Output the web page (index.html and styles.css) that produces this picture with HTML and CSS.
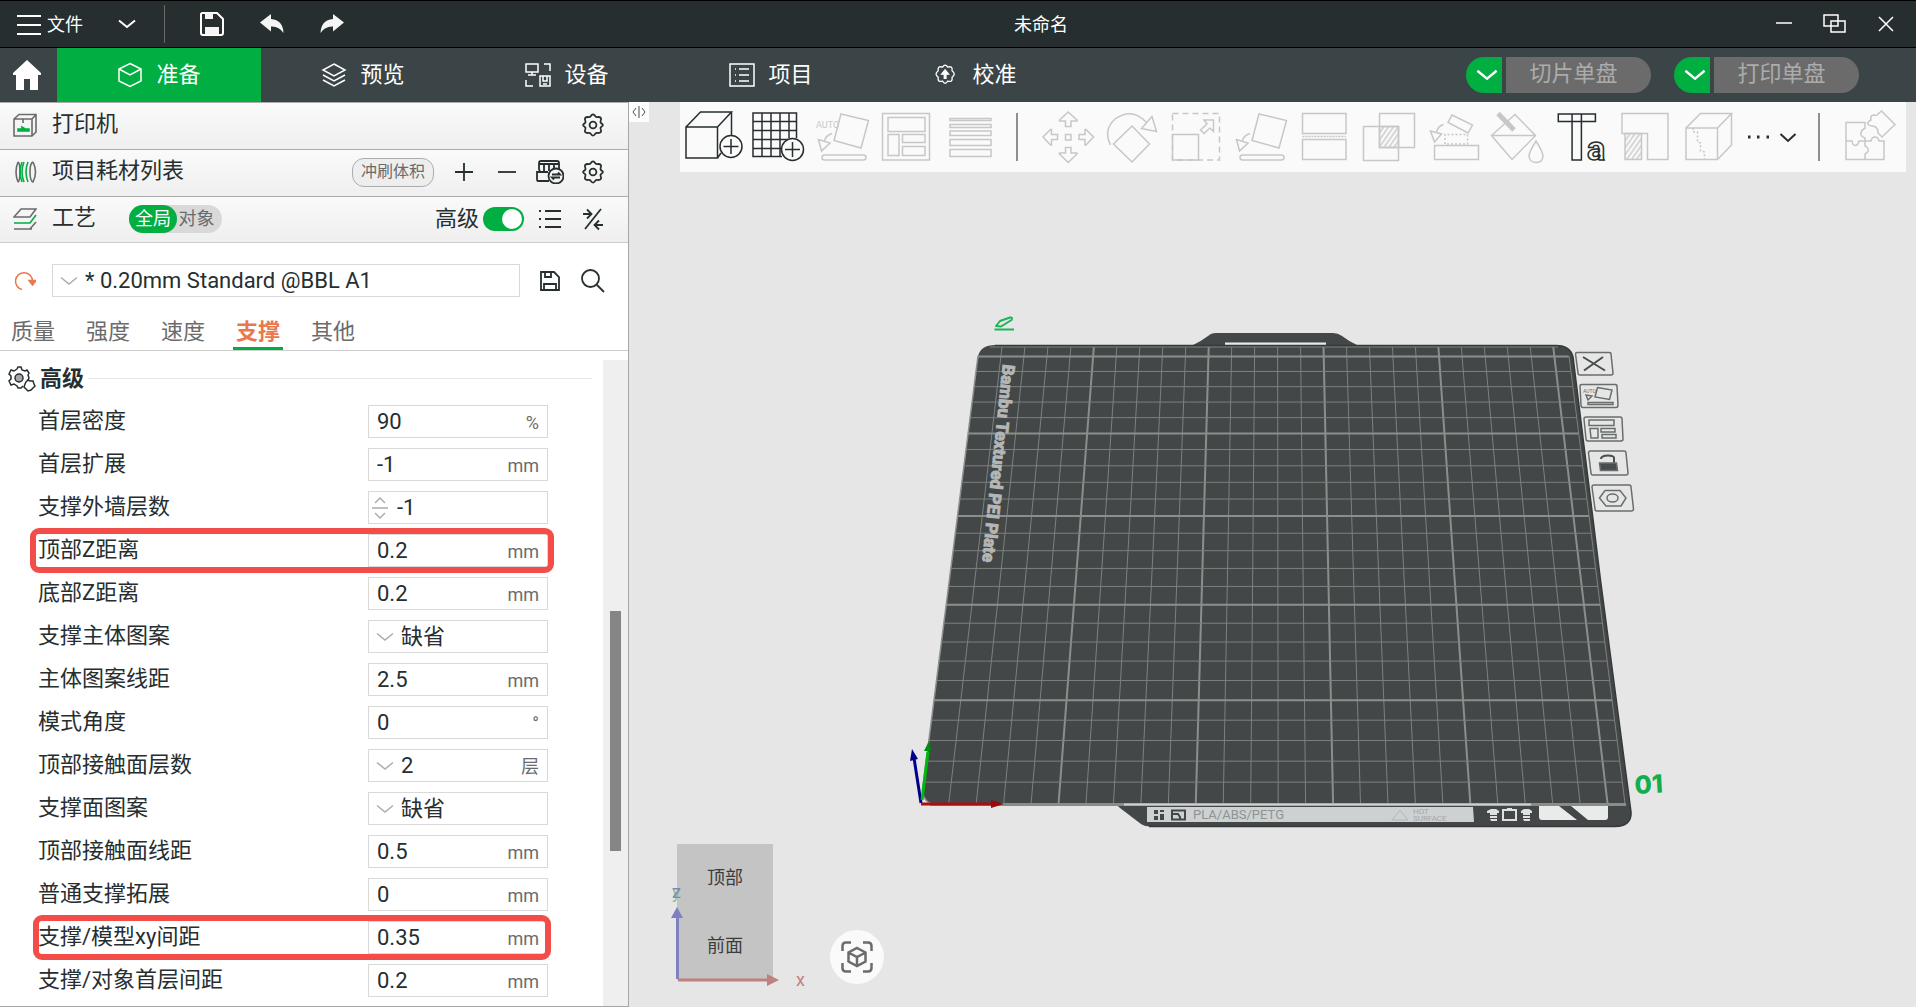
FILE: index.html
```html
<!DOCTYPE html>
<html lang="zh-CN">
<head>
    <meta charset="UTF-8">
    <meta name="viewport" content="width=device-width, initial-scale=1.0">
    <title>未命名</title>
    <link rel="stylesheet" href="styles.css">
</head>
<body>
    <!-- Shared icons -->
    <svg class="defs" width="0" height="0">
        <symbol id="chevron" viewBox="0 0 18 10"><path d="M1 1.5L9 8L17 1.5"/></symbol>
        <symbol id="gear" viewBox="0 0 24 24"><path d="M9.6 3.4Q12 -.6 14.4 3.4Q15.4 4.6 17 4Q21.4 4 19.6 8Q19 9.4 20.4 10.4Q23.4 12 20.4 13.8Q19 14.8 19.6 16Q21.4 20 17 20Q15.4 19.4 14.4 20.6Q12 24.6 9.6 20.6Q8.6 19.4 7 20Q2.6 20 4.4 16Q5 14.8 3.6 13.8Q.6 12 3.6 10.4Q5 9.4 4.4 8Q2.6 4 7 4Q8.6 4.6 9.6 3.4Z"/><circle cx="12" cy="12" r="3.4"/></symbol>
        <symbol id="orient" viewBox="0 0 64 70"><path d="M31 12L58.500 18.500L51 46L24 38.500ZM8.500 37.500L20 41L11.500 49ZM22 31.500Q15 34 14.500 39"/><rect x="12" y="53" width="44" height="5" rx="2.500"/></symbol>
        <pattern id="hatch" width="4" height="4" patternUnits="userSpaceOnUse" patternTransform="rotate(35)"><path d="M1 0V4" stroke="#c6c8c8" stroke-width="1.400"/></pattern>
    </svg>

    <header class="titlebar">
        <div class="title-left">
            <button class="file-menu">
                <svg width="24" height="20" viewBox="0 0 24 20"><path d="M0 1H24M0 10H24M0 19H24"/></svg>
                文件
            </button>
            <button class="title-btn" aria-label="更多"><svg width="18" height="10"><use href="#chevron"/></svg></button>
            <span class="title-sep"></span>
            <button class="title-btn save" aria-label="保存"><svg width="24" height="24" viewBox="0 0 24 24"><path d="M2 1H17L23 7V21Q23 23 21 23H3Q1 23 1 21V2Z"/><path class="solid" d="M5 1H13V7H5ZM5 15H19V23H5Z"/></svg></button>
            <button class="title-btn" aria-label="撤销"><svg width="24" height="20" viewBox="0 0 24 20"><path class="solid" d="M0 8.500L11 0V5Q23 6 23.500 19Q19 12 11 12.500V17.500Z"/></svg></button>
            <button class="title-btn" aria-label="重做"><svg width="24" height="20" viewBox="0 0 24 20"><path class="solid" d="M24 8.500L13 0V5Q1 6 .5 19Q5 12 13 12.500V17.500Z"/></svg></button>
        </div>
        <h1 class="doc-title">未命名</h1>
        <div class="window-btns">
            <button aria-label="最小化"><svg width="16" height="16" viewBox="0 0 16 16"><path d="M0 7H16"/></svg></button>
            <button aria-label="还原"><svg width="24" height="20" viewBox="0 0 24 20"><path d="M1 1H15V12H1ZM8 7H22V18H8Z"/></svg></button>
            <button aria-label="关闭"><svg width="16" height="16" viewBox="0 0 16 16"><path d="M1 1L15 15M15 1L1 15"/></svg></button>
        </div>
    </header>

    <nav class="tabbar">
        <button class="home" aria-label="主页"><svg width="30" height="32" viewBox="0 0 30 32"><path d="M15 1L29 14V16H26V31H18V20H12V31H4V16H1V14Z"/></svg></button>
        <button class="tab active"><svg width="26" height="26" viewBox="0 0 26 26"><path d="M13 1.500L24 7V19L13 24.500L2 19V7ZM2 7L13 13L24 7"/></svg>准备</button>
        <button class="tab"><svg width="26" height="26" viewBox="0 0 26 26"><path d="M13 2L24 8L13 14L2 8ZM2 13L13 19L24 13M2 18L13 24L24 18"/></svg>预览</button>
        <button class="tab"><svg width="26" height="26" viewBox="0 0 26 26"><path d="M1 2H13V10H1ZM7 10V13M3 13H11M19 2H25V9M1 18V24H8M15 14H25V24H15ZM18 14V19H22V14M18 22H22"/></svg>设备</button>
        <button class="tab"><svg width="26" height="26" viewBox="0 0 26 26"><path d="M1 2H25V24H1ZM6 7H7M10 7H20M6 13H7M10 13H20M6 19H7M10 19H20"/></svg>项目</button>
        <button class="tab"><svg width="26" height="26" viewBox="-2 -2 30 30"><path d="M9 4Q12 -1 15 4Q21 2 20 8Q25 12 20 15.500Q21 22 15 20Q12 25 9 20Q3 22 4 15.500Q-1 12 4 8Q3 2 9 4Z"/><path d="M12 7L16 12H13V17H11V12H8Z" fill="#fff"/></svg>校准</button>
        <div class="actions">
            <div class="split">
                <button class="split-arrow" aria-label="切片选项"><svg width="22" height="12"><use href="#chevron"/></svg></button>
                <button class="split-main" disabled>切片单盘</button>
            </div>
            <div class="split">
                <button class="split-arrow" aria-label="打印选项"><svg width="22" height="12"><use href="#chevron"/></svg></button>
                <button class="split-main" disabled>打印单盘</button>
            </div>
        </div>
    </nav>

    <main class="workspace">
        <aside class="sidebar">
            <div class="bar">
                <svg class="bar-icon" width="24" height="24" viewBox="0 0 24 24"><path d="M1 6L6 1.500H23V19L19 23H1ZM1 6H19V23M19 6L23 1.500M10 6V10" stroke="#6b6b6b"/><path d="M5 18H16V16H12L9 14V16H5Z" fill="#00ae42" stroke="#00ae42"/></svg>
                <h2>打印机</h2>
                <button class="icon-btn push" aria-label="打印机设置"><svg width="24" height="24"><use href="#gear"/></svg></button>
            </div>
            <div class="bar">
                <svg class="bar-icon" width="24" height="24" viewBox="0 0 24 24"><path d="M5 2Q1 12 5 22M5 2Q7 3 7 12Q7 21 5 22M20 2Q17 3 17 12Q17 21 20 22Q25 12 20 2" stroke="#6b6b6b"/><path d="M11 2Q7 12 11 22M15 2Q11 12 15 22M9 2Q5 12 9 22" stroke="#00ae42"/></svg>
                <h2>项目耗材列表</h2>
                <button class="flush push">冲刷体积</button>
                <button class="icon-btn" aria-label="添加"><svg width="20" height="20" viewBox="0 0 20 20"><path d="M1 10H19M10 1V19"/></svg></button>
                <button class="icon-btn" aria-label="删除"><svg width="20" height="20" viewBox="0 0 20 20"><path d="M1 10H19"/></svg></button>
                <button class="icon-btn" aria-label="同步耗材"><svg width="28" height="24" viewBox="0 0 28 24"><path d="M13 21H2Q1 21 1 19V12H4L3 9V3Q3 1 5 1H21Q23 1 23 3V9M3 4H23M8 4V11M13 4V11M18 4V9M4 12H12"/><circle cx="20" cy="16" r="7.500"/><path d="M16 14.500H24L22 12.500M24 17.500H16L18 19.500"/></svg></button>
                <button class="icon-btn" aria-label="耗材设置"><svg width="24" height="24"><use href="#gear"/></svg></button>
            </div>
            <div class="bar">
                <svg class="bar-icon" width="24" height="24" viewBox="0 0 24 24"><path d="M8 2H23L17 10H1ZM19 22H1M1 22H17L23 15" stroke="#6b6b6b"/><path d="M1 16H17L23 8" stroke="#00ae42"/></svg>
                <h2>工艺</h2>
                <div class="scope">
                    <button class="on">全局</button>
                    <button>对象</button>
                </div>
                <label class="advanced push">高级
                    <input type="checkbox" class="switch" checked>
                </label>
                <button class="icon-btn" aria-label="列表"><svg width="22" height="20" viewBox="0 0 22 20"><path d="M0 2H2M6 2H22M0 10H2M6 10H22M0 18H2M6 18H22" stroke-width="2"/></svg></button>
                <button class="icon-btn" aria-label="对比"><svg width="24" height="24" viewBox="0 0 24 24"><path d="M20 2L4 22M2 7H10M6 2.500L10.500 7L6 11.500M22 18H13M18 13.500L13.500 18L18 22.500"/></svg></button>
            </div>

            <div class="preset">
                <button class="reset" aria-label="重置"><svg width="22" height="20" viewBox="0 0 22 20"><path d="M8 18.500A8.500 8.500 0 1 1 18.500 10"/><path d="M15 9.500H22L18.500 14Z" fill="#e9784d"/></svg></button>
                <div class="field preset-field">
                    <svg class="arrow" width="18" height="10"><use href="#chevron"/></svg>
                    <select aria-label="工艺预设"><option>* 0.20mm Standard @BBL A1</option></select>
                </div>
                <button class="icon-btn" aria-label="保存预设"><svg width="20" height="20" viewBox="0 0 20 20"><path d="M1 1H14L19 6V19H1ZM5 1V6H11V1M4 19V13H16V19"/></svg></button>
                <button class="icon-btn" aria-label="搜索"><svg width="24" height="24" viewBox="0 0 24 24"><circle cx="9.500" cy="9.500" r="8.500"/><path d="M16 16L23 23"/></svg></button>
            </div>

            <div class="pages">
                <button>质量</button>
                <button>强度</button>
                <button>速度</button>
                <button class="current">支撑</button>
                <button>其他</button>
            </div>

            <div class="panel">
                <div class="params">
                    <h3 class="group">
                        <svg width="28" height="26" viewBox="0 0 28 26"><path d="M9 3L10 1H13L14 4L17 5L19 4L21 7L20 9L21 12L20 14M9 3L6 5L3 4L1 8L3 10V13L1 15L3 19L6 18L9 20L10 22H13L15 20" /><circle cx="11" cy="12" r="4" fill="#a5a9aa"/><path d="M18 16L20 14L22 15L25 15L26 18L27 20L25 22L23 24L20 25L18 23L16 21L17 18Z"/></svg>
                        高级
                    </h3>
                    <div class="param">
                        <label for="density">首层密度</label>
                        <div class="field"><input id="density" value="90"><span class="unit">%</span></div>
                    </div>
                    <div class="param">
                        <label for="expand">首层扩展</label>
                        <div class="field"><input id="expand" value="-1"><span class="unit">mm</span></div>
                    </div>
                    <div class="param">
                        <label for="walls">支撑外墙层数</label>
                        <div class="field">
                            <svg class="spin" width="18" height="26" viewBox="0 0 16 26"><path d="M3 8L8 3L13 8M0 13H16M3 18L8 23L13 18"/></svg>
                            <input id="walls" value="-1">
                        </div>
                    </div>
                    <div class="param marked wide">
                        <label for="topz">顶部Z距离</label>
                        <div class="field"><input id="topz" value="0.2"><span class="unit">mm</span></div>
                    </div>
                    <div class="param">
                        <label for="bottomz">底部Z距离</label>
                        <div class="field"><input id="bottomz" value="0.2"><span class="unit">mm</span></div>
                    </div>
                    <div class="param">
                        <label for="base-pattern">支撑主体图案</label>
                        <div class="field">
                            <svg class="arrow" width="18" height="10"><use href="#chevron"/></svg>
                            <select id="base-pattern"><option>缺省</option></select>
                        </div>
                    </div>
                    <div class="param">
                        <label for="base-spacing">主体图案线距</label>
                        <div class="field"><input id="base-spacing" value="2.5"><span class="unit">mm</span></div>
                    </div>
                    <div class="param">
                        <label for="angle">模式角度</label>
                        <div class="field"><input id="angle" value="0"><span class="unit">°</span></div>
                    </div>
                    <div class="param">
                        <label for="top-layers">顶部接触面层数</label>
                        <div class="field">
                            <svg class="arrow" width="18" height="10"><use href="#chevron"/></svg>
                            <select id="top-layers"><option>2</option></select>
                            <span class="unit">层</span>
                        </div>
                    </div>
                    <div class="param">
                        <label for="face-pattern">支撑面图案</label>
                        <div class="field">
                            <svg class="arrow" width="18" height="10"><use href="#chevron"/></svg>
                            <select id="face-pattern"><option>缺省</option></select>
                        </div>
                    </div>
                    <div class="param">
                        <label for="top-spacing">顶部接触面线距</label>
                        <div class="field"><input id="top-spacing" value="0.5"><span class="unit">mm</span></div>
                    </div>
                    <div class="param">
                        <label for="normal-expand">普通支撑拓展</label>
                        <div class="field"><input id="normal-expand" value="0"><span class="unit">mm</span></div>
                    </div>
                    <div class="param marked">
                        <label for="xy">支撑/模型xy间距</label>
                        <div class="field"><input id="xy" value="0.35"><span class="unit">mm</span></div>
                    </div>
                    <div class="param">
                        <label for="first-xy">支撑/对象首层间距</label>
                        <div class="field"><input id="first-xy" value="0.2"><span class="unit">mm</span></div>
                    </div>
                </div>
                <div class="track"><div class="thumb"></div></div>
            </div>
        </aside>

        <section class="view">
            <!-- Build plate -->
            <svg class="scene" viewBox="629 102 1287 905">
                <path d="M978 356Q981 345 995 345H1193Q1200 342 1208 336Q1211 333 1216 333H1333Q1338 333 1342 336Q1350 342 1357 345H1555Q1570 345 1573 357L1600.500 580L1631 812Q1632 826 1615 826.500H1149Q1144 826 1141 824L1120 808Q1118 805 1112 805H936Q923 803 922.500 790L950 575Z" fill="#434748"/>
                <path d="M1225 342.500H1326V345H1225Z" fill="#e9eaea"/>
                <path d="M978 356L950 575L922.500 790Q923 803 936 805" fill="none" stroke="#8d918e" stroke-width="1.500"/>
                <path d="M995 345.500H1555Q1570 345 1573 357L1600.500 580L1631 812Q1632 826 1615 826.500H1149" fill="none" stroke="#36393a" stroke-width="1.500"/>
                <g id="grid"></g>
                <path d="M930 804.500H1626" stroke="#898d8a" stroke-width="3"/>
                <path d="M1124 804.500H1531" stroke="#cdd1d2" stroke-width="2"/>
                <text class="plate-name" transform="translate(1003 364) rotate(96)">Bambu Textured PEI Plate</text>

                <path d="M1147 807H1473L1474 822H1147Z" fill="#cdd1d2"/>
                <path d="M1154 810H1158V814H1154ZM1160 810H1164V812H1160ZM1160 814H1164V820H1160ZM1154 816H1158V820H1154Z" fill="#434748"/>
                <path d="M1172 810.500H1185V819.500H1172ZM1173 814H1178L1180 817V819" fill="none" stroke="#434748" stroke-width="2"/>
                <text class="plate-mat" x="1193" y="819">PLA/ABS/PETG</text>
                <path d="M1392 820L1400 810L1408 820Z" fill="none" stroke="#b3b7b8"/>
                <text class="plate-hot" x="1413" y="814">HOT</text>
                <text class="plate-hot" x="1413" y="821">SURFACE</text>
                <path d="M1487 811L1491 809H1496L1499 811V813H1497V815H1490V813H1487ZM1490 816H1497V818H1490ZM1490 819H1497V821H1491ZM1521 811L1524 809H1529L1532 811V813H1530V815H1523V813H1521ZM1523 816H1530V818H1523ZM1523 819H1530V821H1524Z" fill="#dfe1e1"/>
                <path d="M1503 810H1516V820H1503ZM1507 809H1512" fill="none" stroke="#dfe1e1" stroke-width="2"/>
                <path d="M1539 806H1559L1577 820H1542Q1539 820 1539 817ZM1571 806H1608V817Q1608 820 1605 820H1588Z" fill="#e9eaea"/>
                <text class="plate-no" transform="translate(1635 794) rotate(-3)">01</text>

                <!-- Origin axes -->
                <g fill="none" stroke-width="3">
                    <path d="M921 803L914 758" stroke="#00008f"/>
                    <path d="M910 761L912 749L918 759Z" fill="#00008f" stroke="none"/>
                    <path d="M922 800L928 752" stroke="#00b70b"/>
                    <path d="M924 751L929 741L931 751Z" fill="#008f0b" stroke="none"/>
                    <path d="M921 804H993" stroke="#b00d0d"/>
                    <path d="M991 800L1004 804L991 808Z" fill="#960b0b" stroke="none"/>
                </g>

                <!-- Rename pen -->
                <path d="M994.500 329.500H1014M996 326L1000 321L1010 317.500Q1013 317 1011.500 320L1001 326.500Z" fill="none" stroke="#1db45a" stroke-width="2" stroke-linejoin="round"/>

                <!-- Plate controls -->
                <g class="plate-tools">
                    <path d="M1577 352.500H1609Q1611 352.500 1611 354L1613 373Q1613 375 1611 375H1580Q1578 375 1578 373L1575.500 354Q1575.500 352.500 1577 352.500Z"/>
                    <path d="M1583 357L1605 370.500M1603 357L1584 370.500" stroke="#4a4d4e" stroke-width="2"/>
                    <path d="M1582 384.500H1615Q1617 384.500 1617 386L1618 405Q1618 407.500 1616 407.500H1583Q1581 407.500 1581 405L1580 386Q1580 384.500 1582 384.500ZM1597.500 387.500L1612 390L1609.500 399.500L1595 397ZM1588 402.500H1613V404.500H1588ZM1586 395L1592 396L1588 400Z"/>
                    <text x="1583" y="393">AUTO</text>
                    <path d="M1586 417H1620Q1622 417 1622 419L1623 439Q1623 441 1621 441H1588Q1586 441 1586 439L1584 419Q1584 417 1586 417ZM1589 420H1614V425.500H1589ZM1590 428.500H1598V438H1591ZM1601 428.500H1615V432H1601ZM1602 434.500H1616V438H1602Z"/>
                    <path d="M1590 451H1624Q1626 451 1626 453L1628 473Q1628 475 1626 475H1593Q1591 475 1591 473L1588.500 453Q1588.500 451 1590 451Z"/>
                    <path d="M1601 459Q1601 455.500 1608 455.500Q1614 455.500 1614 458V463" stroke="#4a4d4e" stroke-width="2"/>
                    <path d="M1599.500 463H1616.500L1617.500 470.500H1600.500Z" fill="#4a4d4e"/>
                    <path d="M1594 485H1629Q1631 485 1631 487L1633.500 509Q1633.500 511 1631 511H1597Q1595 511 1595 509L1592 487Q1592 485 1594 485ZM1599.500 498L1605 490.500H1620L1626 498L1621 506H1606ZM1607 498A5.500 4 0 1 0 1618 498A5.500 4 0 1 0 1607 498"/>
                </g>
            </svg>

            <button class="collapse" aria-label="折叠侧栏"><svg width="14" height="12" viewBox="0 0 14 12"><path d="M4 2L1 6L4 10M7 0V12M10 2L13 6L10 10"/></svg></button>

            <div class="toolbar">
                <button class="enabled" aria-label="添加模型"><svg viewBox="0 0 64 70"><path d="M4 25H35.500V56H4ZM4 25L18.500 10H49.500L35.500 25M49.500 10V33M35.500 56L39 51"/><circle cx="49" cy="44.500" r="11"/><path d="M41.500 44.500H56.500M49 37V52"/></svg></button>
                <button class="enabled" aria-label="添加盘"><svg viewBox="0 0 64 70"><path d="M36 54.500H7V11H50.500V36M16 11V54.500M25 11V54.500M34 11V54.500M43 11V36M7 19.500H50.500M7 28.500H50.500M7 37.500H42M7 46.500H35"/><circle cx="46.500" cy="47.500" r="11"/><path d="M39 47.500H54M46.500 40V55"/></svg></button>
                <button aria-label="自动朝向"><svg viewBox="0 0 64 70"><use href="#orient"/><text class="auto" x="6" y="26">AUTO</text></svg></button>
                <button aria-label="自动摆放"><svg viewBox="0 0 64 70"><path d="M8.500 11.500H55.500V58H8.500ZM14 15.500H51V29.500H14ZM14 32.500H25V53.500H14ZM28.500 32.500H51V40.500H28.500ZM28.500 44.500H51V53.500H28.500Z"/></svg></button>
                <button aria-label="可变层高"><svg viewBox="0 0 64 70"><path d="M12 16.500H53V18.500H12ZM12 22.500H53V25.500H12ZM12 29H53V33.500H12ZM12 37.500H53V43.500H12ZM12 47.500H53V54.500H12Z"/></svg></button>
                <span class="tool-sep"></span>
                <button aria-label="移动"><svg viewBox="0 0 64 70"><path d="M29.500 32.500H35V38H29.500ZM32.200 10L41 18V19H35V24.500H29.500V19H23.500V18ZM32.200 60.500L41 52V51H35V45.500H29.500V51H23.500V52ZM7 35L14.500 27.500H15.500V32.500H21.500V37.500H15.500V43H14.500ZM57.500 35L50 27.500H49V32.500H43V37.500H49V43H50Z"/></svg></button>
                <button aria-label="旋转"><svg viewBox="0 0 64 70"><path d="M32 24L49.500 42L32 60L13.500 42ZM10.500 43Q3 28 15 17Q32 5 46 20M52 14.500L56.500 29.500L41.500 26.500Z"/></svg></button>
                <button aria-label="缩放"><svg viewBox="0 0 64 70"><path d="M8.500 11.500H55.500V58H8.500Z" stroke-dasharray="6 4"/><path d="M8.500 32.500H34.500V58H8.500ZM40 18H49.500V29.500L46 26L40 31.500L36.500 28L43 22Z"/></svg></button>
                <button aria-label="选择底面"><svg viewBox="0 0 64 70"><use href="#orient"/></svg></button>
                <button aria-label="剪切"><svg viewBox="0 0 64 70"><path d="M10.500 11.500H54V31.500H10.500ZM10.500 37.500H54V57.500H10.500Z"/><path d="M10.500 34.500H54" stroke-dasharray="2 1"/></svg></button>
                <button aria-label="布尔"><svg viewBox="0 0 64 70"><path d="M23.500 24.500H42.500V45.500H23.500Z" fill="url(#hatch)"/><path d="M23.500 11.500H58.500V45.500H23.500ZM7.500 24.500H42.500V58.500H7.500Z"/></svg></button>
                <button aria-label="支撑绘制"><svg viewBox="0 0 64 70"><path d="M14.500 43.500H58.500V57.500H14.500ZM32 13L52.500 23L48 31L28 20.500ZM10.500 29L21.500 32L14.500 40ZM23.500 22.500Q18 24 16.500 30"/><path d="M25 42V32.500H47.500V42Z" stroke-dasharray="2 2"/></svg></button>
                <button aria-label="上色"><svg viewBox="0 0 64 70"><path d="M31 12.500L51.500 33.500L28 57.500L7.500 33.500ZM7.500 33.500H51.500M52 39Q45 50 45 54.500Q46 60.500 52 60.500Q58.500 60.500 59 54.500Q59 50 52 39Z"/><path d="M14 11.500L30 28" stroke-width="5"/></svg></button>
                <button class="enabled" aria-label="文字"><svg viewBox="0 0 64 70"><text class="big-t" x="9" y="58">T<tspan class="small-a" x="39">a</tspan></text></svg></button>
                <button aria-label="接缝绘制"><svg viewBox="0 0 64 70"><path d="M10 11.500H56V57.500H35.500V31.500H10Z"/><path d="M13 31.500H29.500V57.500H13Z" fill="url(#hatch)"/></svg></button>
                <button aria-label="模糊表面"><svg viewBox="0 0 64 70"><path d="M10 26H41.500V57.500H10ZM10 26L24.500 11.500H55.500L41.500 26M55.500 11.500V43L41.500 57.500"/><path d="M17 26V30H21.500V40L24.500 41V49L28.500 50V57.500" stroke-dasharray="2 2"/></svg></button>
                <button class="enabled" aria-label="更多工具"><svg viewBox="0 0 64 70"><path d="M8 35H10.500M17 35H19.500M26.500 35H29" stroke-width="3"/><path d="M40.500 32L48 39L55.500 32" stroke-width="2"/></svg></button>
                <span class="tool-sep"></span>
                <button aria-label="装配"><svg viewBox="0 0 64 70"><path d="M8 20.500H27V26Q22 29 23 33Q24 35 27 36V39H21Q20 43.500 17.500 43.500Q14.500 43.500 14 39H8ZM8 39V57.500H27V52Q31 50 30 47Q29 44.500 27 44V39M27 57.500H46V39H41Q40 35 37 35Q34 35 33 39H27M43.500 9L57 22.500L44 35L40 31Q40 24 34 24Q31 24 30 22Q29 20 33 18Q32 13 36 13Q39 14 40 12Z"/></svg></button>
            </div>

            <svg class="viewcube" width="200" height="172" viewBox="30 115 200 172">
                <rect x="37" y="124" width="96" height="136" fill="#c4c4c4"/>
                <text class="face" x="85" y="164">顶部</text>
                <text class="face" x="85" y="232">前面</text>
                <path d="M37.500 259V198" stroke="#8080bf" stroke-width="3"/>
                <path d="M31 198L37 187L43 198Z" fill="#8080bf"/>
                <path d="M38 260H128" stroke="#bf8080" stroke-width="3"/>
                <path d="M127 254V266L139 260Z" fill="#bf8080"/>
                <text class="axis" x="32" y="178" fill="#80c592">y</text>
                <text class="axis" x="32" y="178" fill="#7f86bd">z</text>
                <text class="axis" x="156" y="266" fill="#c57f7f">x</text>
            </svg>

            <button class="fit" aria-label="适应视图"><svg width="32" height="32" viewBox="0 0 32 32"><path d="M1.500 10V5Q1.500 1.500 5 1.500H10M22 1.500H27Q30.500 1.500 30.500 5V10M30.500 22V27Q30.500 30.500 27 30.500H22M10 30.500H5Q1.500 30.500 1.500 27V22M16 7L24.500 11.500V20.500L16 25L7.500 20.500V11.500ZM7.500 11.500L16 16L24.500 11.500M16 16V25"/></svg></button>
        </section>
    </main>

    <script>
        const grid = document.getElementById('grid');

        function addLine(x1, y1, x2, y2, bold) {
            const line = document.createElementNS('http://www.w3.org/2000/svg', 'line');
            line.setAttribute('x1', x1);
            line.setAttribute('y1', y1);
            line.setAttribute('x2', x2);
            line.setAttribute('y2', y2);
            line.setAttribute('class', bold ? 'grid-line bold' : 'grid-line');
            grid.appendChild(line);
        }

        // Plate edges in perspective, y is the screen row
        function edge(y, top, bottom) {
            return top + (bottom - top) * (y - 347) / (803.5 - 347);
        }

        // Lines along the depth of the plate, every fifth one is thicker
        for (let i = 1; i <= 25; i++) {
            addLine(979 + 22.97 * i, 347, 921.3 + 27.45 * i, 803.5, i % 5 === 0);
        }
        addLine(1569, 356, 1625, 803.5, false);
        addLine(990, 347, 1558, 347, false);

        // Lines across the plate
        for (let k = 0; k <= 24; k++) {
            const y = (356.5 + 12.494 * k) / (1 - 0.0067 * k);
            addLine(edge(y, 979, 921.3), y, edge(y, 1567.5, 1625), y, k % 5 === 0);
        }
    </script>
</body>
</html>
```
FILE: styles.css
```css
* {
    box-sizing: border-box;
}

body {
    margin: 0;
    height: 100vh;
    display: flex;
    flex-direction: column;
    overflow: hidden;
    font-family: Roboto, 'Noto Sans CJK SC', sans-serif;
    font-size: 22px;
    line-height: 32px;
    color: #262e30;
    background-color: #e6e6e6;
}

button,
input,
select {
    font: inherit;
    color: inherit;
    background: none;
    border: none;
    border-radius: 0;
    padding: 0;
    margin: 0;
}

button {
    display: flex;
    align-items: center;
    justify-content: center;
    flex-shrink: 0;
}

h1, h2, h3 {
    margin: 0;
    font-size: inherit;
    font-weight: normal;
}

svg {
    display: block;
    flex-shrink: 0;
    fill: none;
}

.defs {
    position: absolute;
}

/* Title bar */
.titlebar {
    display: flex;
    height: 48px;
    border-top: 1px solid #000;
    border-bottom: 1px solid #000;
    background-color: #262e30;
    color: #fff;
    font-size: 18px;
    stroke: #fff;
    stroke-width: 2;
}

.title-left {
    display: flex;
    align-items: center;
    width: 365px;
    padding-left: 17px;
}

.file-menu {
    gap: 6px;
    padding-top: 1px;
}

.title-btn {
    width: 60px;
    height: 46px;
}

.file-menu + .title-btn {
    margin-left: 14px;
}

.title-btn .solid {
    fill: #f5f5f5;
    stroke: none;
}

.title-sep {
    width: 1px;
    height: 38px;
    margin: 0 17px 0 7px;
    background-color: #6b6b6b;
}

.doc-title {
    flex: 1;
    text-align: center;
    line-height: 48px;
}

.window-btns {
    display: flex;
    padding: 0 5px 0 41px;
    stroke-width: 1.5;
}

.window-btns button {
    width: 51px;
}

/* Main tabs */
.tabbar {
    display: flex;
    height: 54px;
    background-color: #3b4446;
    color: #fff;
}

.home {
    width: 57px;
    padding-right: 4px;
}

.home path {
    fill: #fff;
}

.tab {
    width: 204px;
    gap: 13px;
    padding-bottom: 1px;
    stroke: #fff;
    stroke-width: 1.5;
}

.tab.active {
    background-color: #00ae42;
}

.actions {
    display: flex;
    align-items: center;
    gap: 23px;
    margin-left: auto;
    padding-right: 57px;
}

.split {
    display: flex;
    gap: 4px;
    height: 36px;
}

.split-arrow {
    width: 36px;
    padding-left: 6px;
    border-radius: 18px 0 0 18px;
    background-color: #00ae42;
    stroke: #fff;
    stroke-width: 2;
}

.split-main {
    width: 145px;
    padding-bottom: 2px;
    padding-right: 10px;
    border-radius: 0 18px 18px 0;
    background-color: #6b6b6b;
    color: #acacac;
}

.workspace {
    flex: 1;
    display: flex;
    min-height: 0;
}

/* Sidebar */
.sidebar {
    width: 629px;
    flex-shrink: 0;
    display: flex;
    flex-direction: column;
    border-right: 1px solid #a6a6a6;
    border-bottom: 1px solid #a6a6a6;
    background-color: #fff;
}

.bar {
    display: flex;
    align-items: center;
    height: 47px;
    padding: 0 14px 2px 13px;
    border-top: 1px solid #acacac;
    background: linear-gradient(#fafafa, #efefef);
}

.bar:nth-child(3) {
    border-bottom: 1px solid #cecece;
}

.bar h2 {
    margin-left: 15px;
    padding-bottom: 2px;
}

.bar-icon {
    stroke-width: 1.6;
}

.push {
    margin-left: auto;
}

.icon-btn {
    width: 43px;
    height: 32px;
    stroke: #262e30;
    stroke-width: 1.8;
}

.flush {
    width: 82px;
    height: 29px;
    margin-right: 8px;
    border: 1px solid #acacac;
    border-radius: 12px;
    background-color: #eee;
    color: #6b6b6b;
    font-size: 16px;
}

.scope {
    display: flex;
    height: 28px;
    margin-left: 33px;
    border-radius: 14px;
    background-color: #d9d9d9;
    color: #6b6b6b;
    font-size: 18px;
}

.scope button {
    width: 45px;
    padding-right: 6px;
}

.scope .on {
    width: 48px;
    padding: 0;
    border-radius: 14px;
    background-color: #00ae42;
    color: #fff;
}

.advanced {
    display: flex;
    align-items: center;
    gap: 4px;
    margin-right: 4px;
}

.switch {
    appearance: none;
    display: flex;
    align-items: center;
    justify-content: flex-end;
    width: 41px;
    height: 24px;
    padding: 2px;
    border-radius: 12px;
    background-color: #00ae42;
}

.switch::before {
    content: '';
    width: 20px;
    height: 20px;
    border-radius: 50%;
    background-color: #fff;
}

.preset {
    display: flex;
    align-items: center;
    padding: 21px 14px 0 0;
}

.reset {
    width: 52px;
    padding-right: 2px;
    stroke: #e9784d;
    stroke-width: 1.5;
}

.field {
    display: flex;
    align-items: baseline;
    width: 180px;
    height: 33px;
    border: 1px solid #d9d9d9;
    background-color: #fff;
}

.field input,
.field select {
    flex: 1;
    width: 0;
    height: 31px;
    padding-left: 8px;
    line-height: 31px;
    outline: none;
    appearance: none;
}

.field select {
    padding-left: 7px;
}

.arrow,
.spin {
    align-self: center;
    margin-left: 7px;
    stroke: #acacac;
    stroke-width: 1.5;
}

.spin {
    margin-left: 2px;
}

.unit {
    padding-right: 8px;
    font-size: 18px;
    color: #6b6b6b;
}

.preset-field {
    flex: 1;
    margin-right: 8px;
}

.pages {
    display: flex;
    gap: 25px;
    height: 54px;
    padding-left: 8px;
    border-bottom: 1px solid #cecece;
    color: #6b6b6b;
}

.pages button {
    width: 50px;
    padding-top: 20px;
    border-bottom: 3px solid transparent;
}

.pages .current {
    color: #e9784d;
    font-weight: bold;
    border-bottom-color: #00ae42;
}

/* Parameters */
.panel {
    flex: 1;
    display: flex;
    min-height: 0;
}

.params {
    flex: 1;
    display: flex;
    flex-direction: column;
    gap: 10px;
    padding-top: 11px;
}

.group {
    display: flex;
    align-items: center;
    gap: 4px;
    height: 33px;
    padding: 0 11px 0 8px;
    font-weight: bold;
    stroke: #262e30;
    stroke-width: 1.5;
}

.group::after {
    content: '';
    flex: 1;
    height: 1px;
    background-color: #e8e8e8;
}

.param {
    position: relative;
    display: flex;
    align-items: center;
    justify-content: space-between;
    margin: 0 55px 0 38px;
}

.param label {
    padding-bottom: 1px;
}

/* Red frame round the settings to check */
.marked::after {
    content: '';
    position: absolute;
    inset: -6px -3px -6px -5px;
    border: 6px solid #f24d49;
    border-radius: 9px;
    pointer-events: none;
}

.marked.wide::after {
    left: -8px;
    right: -6px;
}

.track {
    width: 25px;
    margin-top: 9px;
    padding: 251px 7px 0;
    background-color: #efefef;
}

.thumb {
    height: 240px;
    background-color: #858585;
}

/* 3D view */
.view {
    position: relative;
    flex: 1;
    display: flex;
    align-items: flex-start;
    min-width: 0;
}

.scene {
    position: absolute;
    inset: 0;
    width: 100%;
    height: 100%;
}

.grid-line {
    stroke: #7d817e;
    stroke-width: 1;
}

.grid-line.bold {
    stroke: #8b8f8c;
    stroke-width: 2;
}

.plate-name {
    font-family: Roboto, sans-serif;
    font-size: 17px;
    font-weight: 700;
    fill: #b4b6b6;
    stroke: #b4b6b6;
    stroke-width: 1;
}

.plate-mat {
    font-size: 13px;
    fill: #8f9394;
}

.plate-hot {
    font-size: 8px;
    fill: #a3a7a8;
}

.plate-no {
    font-family: Inter, sans-serif;
    font-size: 25px;
    font-weight: 800;
    fill: #13ad4d;
}

.plate-tools {
    stroke: #6a6d6e;
    stroke-width: 1.5;
}

.plate-tools text {
    font-size: 5px;
    fill: #6a6d6e;
    stroke: none;
}

.collapse {
    position: relative;
    width: 20px;
    height: 20px;
    background-color: #fdfdfd;
    stroke: #4a4d4e;
}

.toolbar {
    position: relative;
    display: flex;
    align-items: center;
    margin: 0 10px 0 auto;
    padding: 0 4px 0 2px;
    background-color: #fafafa;
    stroke: #c6c8c8;
    stroke-width: 1.5;
}

.toolbar svg {
    width: 64px;
    height: 70px;
    overflow: visible;
}

.toolbar .enabled {
    stroke: #262e30;
}

.auto {
    font-size: 9px;
    fill: #c6c8c8;
    stroke: none;
}

.big-t {
    font-size: 64px;
    font-weight: bold;
    fill: none;
}

.small-a {
    font-size: 34px;
}

.tool-sep {
    width: 2px;
    height: 48px;
    margin: 0 18px 0 14px;
    background-color: #8b9091;
}

.viewcube {
    position: absolute;
    left: 41px;
    bottom: 0;
}

.face {
    font-size: 18px;
    text-anchor: middle;
    fill: #3c3c3c;
}

.axis {
    font-size: 18px;
}

.fit {
    position: absolute;
    left: 201px;
    bottom: 23px;
    width: 54px;
    height: 54px;
    border-radius: 50%;
    background-color: #fafafa;
    stroke: #6b6b6b;
    stroke-width: 2.5;
}
```
